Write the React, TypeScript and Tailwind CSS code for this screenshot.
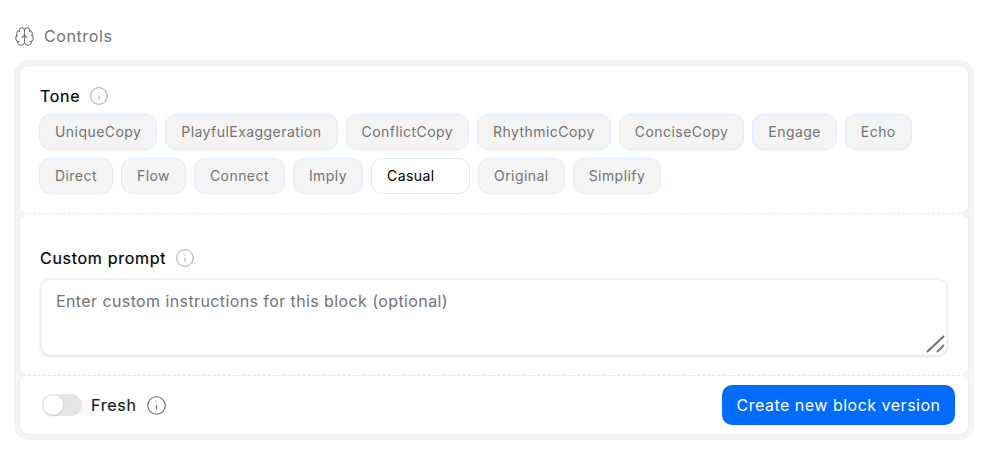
import React from 'react';
import { Brain, Info } from 'lucide-react';

const row1 = ['UniqueCopy', 'PlayfulExaggeration', 'ConflictCopy', 'RhythmicCopy', 'ConciseCopy', 'Engage', 'Echo'];
const row2 = ['Direct', 'Flow', 'Connect', 'Imply', 'Casual', 'Original', 'Simplify'];

const Chip = ({ label }: { label: string }) =>
    label === 'Casual' ? (
        <div className="h-9 w-[99px] flex items-center pl-[15px] pb-px rounded-[11px] border border-[#deebff] bg-white text-[14px] tracking-[0.42px] text-black">{label}</div>
    ) : (
        <div className="h-9 flex items-center px-[15px] pb-px rounded-[11px] border border-[#deebff] bg-[#f4f4f5] text-[14px] tracking-[0.44px] text-[#737373]">{label}</div>
    );

const Divider = () => (
    <div className="relative h-0 border-t border-dashed border-[#e5e5e5] mx-[3px]">
        <span className="absolute -left-[7px] -top-[5px] w-[9px] h-[9px] rounded-full bg-[#f4f4f5]" />
        <span className="absolute -right-[7px] -top-[5px] w-[9px] h-[9px] rounded-full bg-[#f4f4f5]" />
    </div>
);

const Label = ({ text }: { text: string }) => (
    <div className="flex items-center gap-[9px] text-[16px] tracking-[0.7px] text-black leading-6 [-webkit-text-stroke:0.2px_black]">
        {text}
        <Info className="w-5 h-5 text-[#a3a3a3] [-webkit-text-stroke:0]" strokeWidth={1.15} />
    </div>
);

export default function App() {
    return (
        <div className="w-[988px] h-[456px] bg-white pt-[24px] pl-[14px] font-['Inter',sans-serif]">
            <div className="flex items-center h-6 gap-[9px] text-[16px] tracking-[0.6px] text-[#737373]">
                <Brain className="w-[21px] h-[21px] text-[#737373]" strokeWidth={1.15} />
                Controls
            </div>
            <div className="mt-[12px] w-[960px] h-[380px] rounded-[14px] bg-[#f4f4f5] p-[5px]">
                <div className="h-[370px] rounded-[10px] bg-white border border-[#ebebed]">
                    <div className="h-[147px] pt-[18px] pl-[19px]">
                        <div className="pl-px"><Label text="Tone" /></div>
                        <div className="mt-[6px] flex gap-2">{row1.map((c) => <Chip key={c} label={c} />)}</div>
                        <div className="mt-2 flex gap-2">{row2.map((c) => <Chip key={c} label={c} />)}</div>
                    </div>
                    <Divider />
                    <div className="h-[161px] pt-[32px] pl-[20px] pr-[20px]">
                        <Label text="Custom prompt" />
                        <div className="relative mt-[8px]">
                            <textarea
                                readOnly
                                placeholder="Enter custom instructions for this block (optional)"
                                className="block w-[908px] h-[78px] resize-none rounded-[10px] border-2 border-[#eef3fb] bg-white px-[14px] py-[9px] text-[16px] tracking-[0.4px] leading-6 text-black placeholder:text-[#737373] outline-none shadow-[0_1px_2px_rgba(0,0,0,0.12)]"
                            />
                            <svg className="absolute right-[2px] bottom-[2px]" width="20" height="20" viewBox="0 0 20 20" fill="none" stroke="#737373" strokeWidth="2">
                                <path d="M1 18 18 2" />
                                <path d="M11 18 18 11" />
                            </svg>
                        </div>
                    </div>
                    <Divider />
                    <div className="flex items-center justify-between pl-[22px] pr-[13px] h-[58px]">
                        <div className="flex items-center">
                            <div className="w-10 h-[22px] rounded-full bg-[#e5e5e5] p-px">
                                <div className="w-5 h-5 rounded-full bg-white shadow-sm" />
                            </div>
                            <span className="ml-[9px] text-[16px] tracking-[0.75px] text-[#18181b] [-webkit-text-stroke:0.2px_#18181b]">Fresh</span>
                            <Info className="ml-[9px] w-[21px] h-[21px] text-[#737373]" strokeWidth={1.4} />
                        </div>
                        <div className="w-[233px] h-10 rounded-[10px] bg-[#006bff] flex items-center justify-center text-[16px] tracking-[0.5px] text-white">Create new block version</div>
                    </div>
                </div>
            </div>
        </div>
    );
}
